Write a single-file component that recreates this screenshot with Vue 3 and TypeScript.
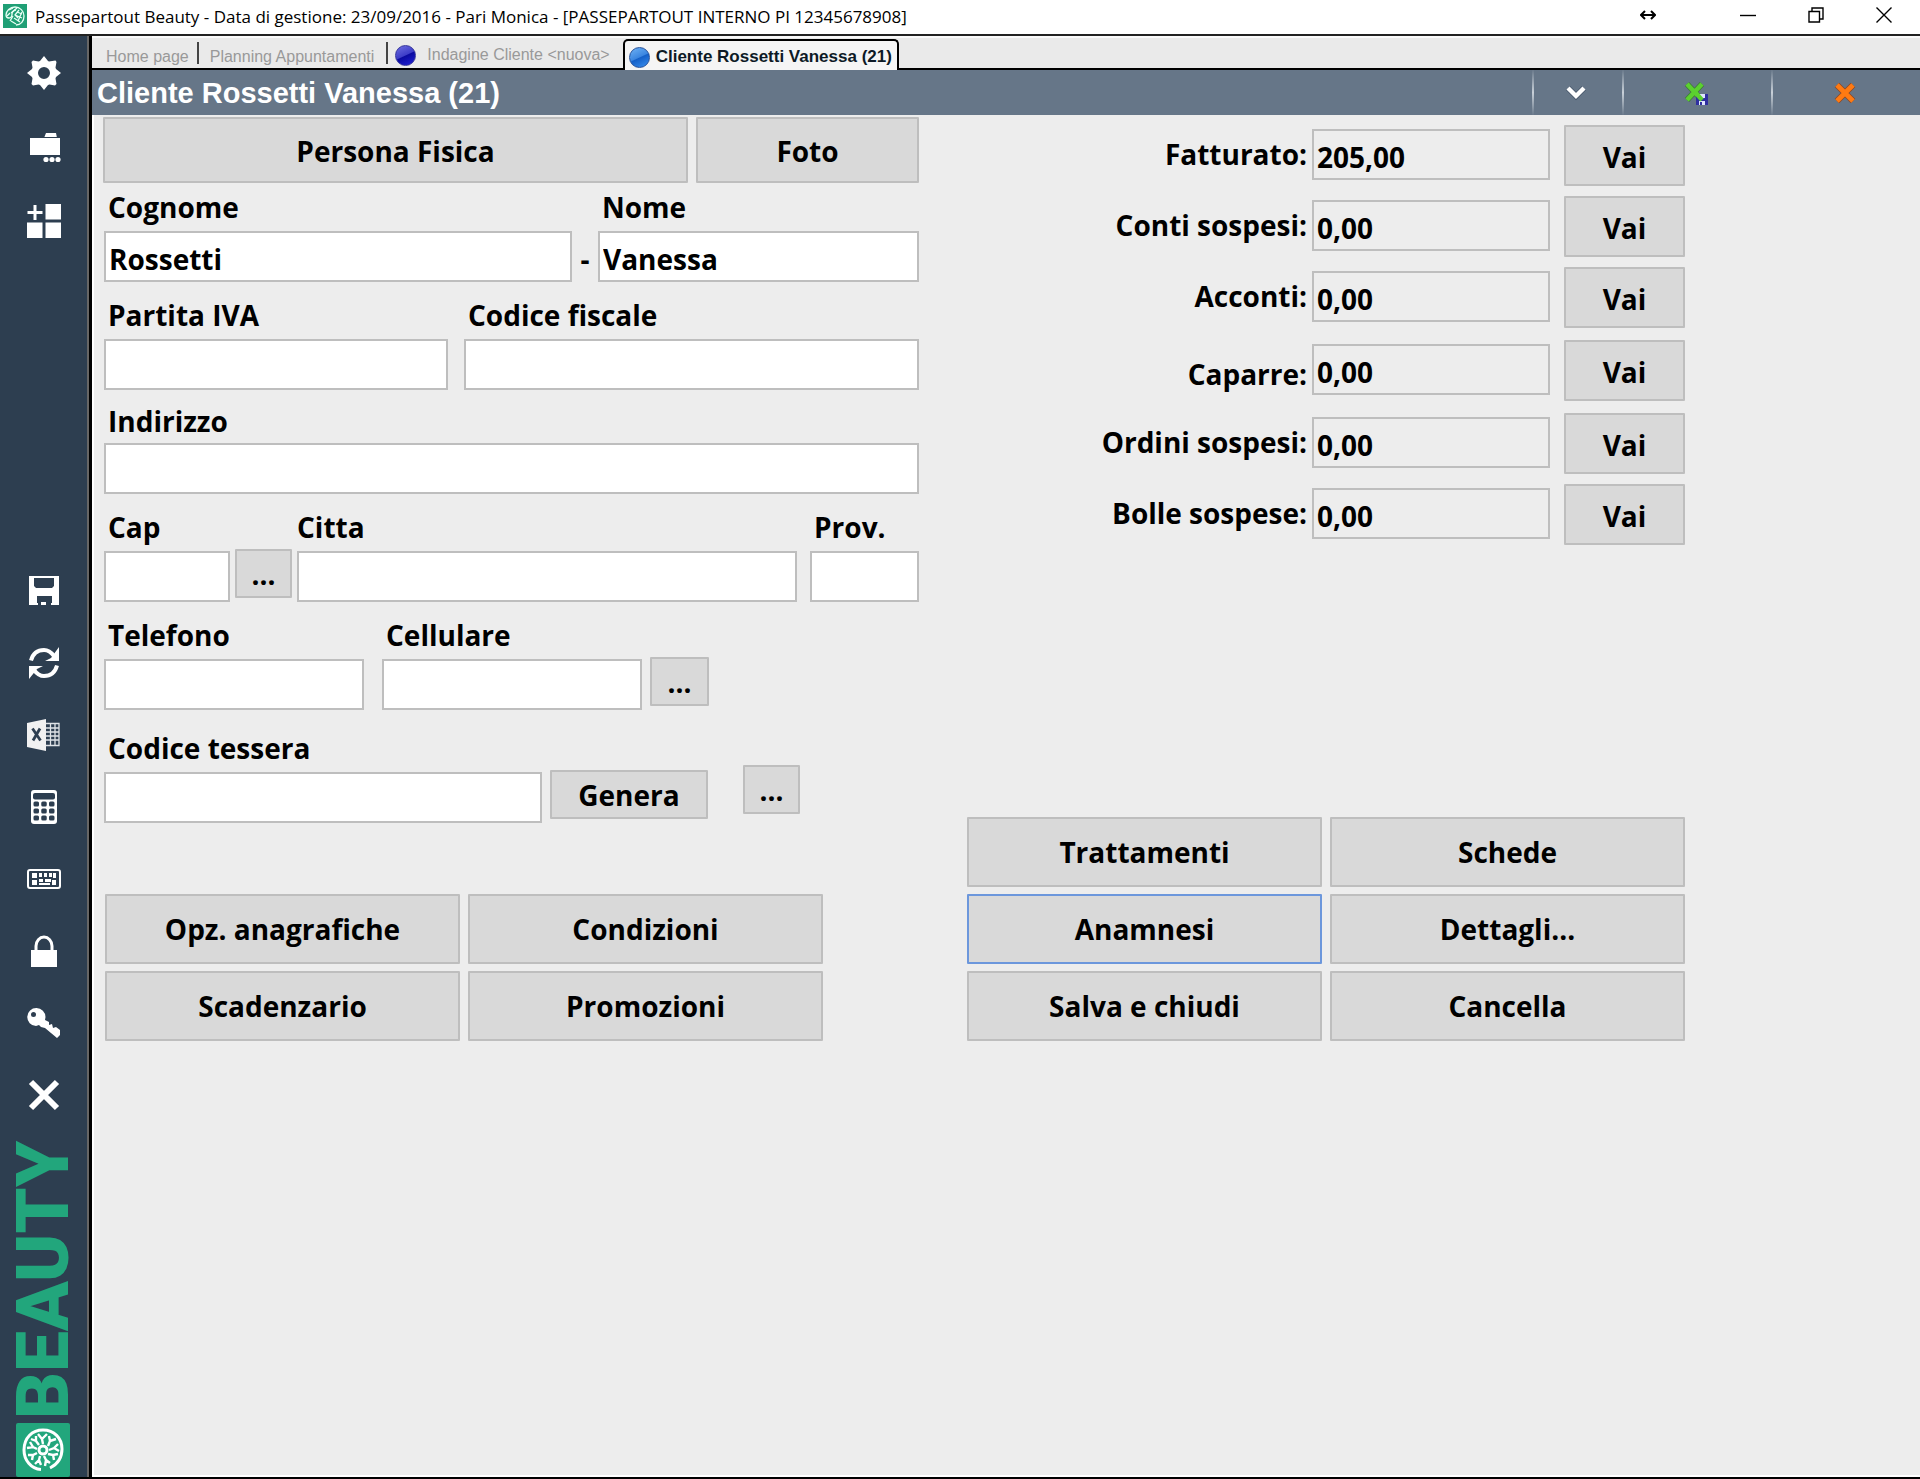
<script setup lang="ts">
import { reactive } from 'vue'

interface Amount {
  id: string
  label: string
  value: string
  spaced?: boolean
  low?: boolean
}

const client = reactive({
  cognome: 'Rossetti',
  nome: 'Vanessa',
  partitaIva: '',
  codiceFiscale: '',
  indirizzo: '',
  cap: '',
  citta: '',
  prov: '',
  telefono: '',
  cellulare: '',
  tessera: '',
})

const amounts: Amount[] = [
  { id: 'fatturato', label: 'Fatturato:', value: '205,00' },
  { id: 'conti', label: 'Conti sospesi:', value: '0,00' },
  { id: 'acconti', label: 'Acconti:', value: '0,00' },
  { id: 'caparre', label: 'Caparre:', value: '0,00', spaced: true, low: true },
  { id: 'ordini', label: 'Ordini sospesi:', value: '0,00', spaced: true },
  { id: 'bolle', label: 'Bolle sospese:', value: '0,00' },
]

const leftActions: string[] = ['Opz. anagrafiche', 'Condizioni', 'Scadenzario', 'Promozioni']
const rightActions: string[] = ['Trattamenti', 'Schede', 'Anamnesi', 'Dettagli...', 'Salva e chiudi', 'Cancella']
</script>

<template>
  <div class="window">
    <header class="titlebar">
      <svg class="app-icon" viewBox="0 0 24 24" aria-hidden="true">
        <rect width="24" height="24" fill="#1f9f75" />
        <g fill="none" stroke="#e8fff5" stroke-width="1.3">
          <path d="M13 21c5 0 8-4 8-9s-4-9-9-9-9 4-9 8c0 2 1 3 3 3s3-2 3-4 2-4 4-4" />
          <path d="M6 6l4-2M8 9l6-5M4 12l3-3M14 8l5 2M12 11l7 3M11 14l6 4M8 17l5 3M16 6l-4 5 3 3M10 12l-3 5M19 8l-4 9" />
        </g>
      </svg>
      <span class="title-text">Passepartout Beauty - Data di gestione: 23/09/2016 - Pari Monica - [PASSEPARTOUT INTERNO PI 12345678908]</span>
      <div class="window-controls">
        <button type="button" class="wc wc-resize" aria-label="Ridimensiona">
          <svg width="16" height="10" viewBox="0 0 16 10"><path d="M1 5h14M5 1L1 5l4 4M11 1l4 4-4 4" fill="none" stroke="#000" stroke-width="2" /></svg>
        </button>
        <button type="button" class="wc" aria-label="Riduci a icona">
          <svg width="16" height="16" viewBox="0 0 16 16"><path d="M0 8.500h16" stroke="#000" stroke-width="1.400" /></svg>
        </button>
        <button type="button" class="wc" aria-label="Ripristina">
          <svg width="16" height="16" viewBox="0 0 16 16"><path d="M1 4.500h10.500V15H1zM4 4.500V1h11v11h-3.500" fill="none" stroke="#000" stroke-width="1.400" /></svg>
        </button>
        <button type="button" class="wc" aria-label="Chiudi finestra">
          <svg width="16" height="16" viewBox="0 0 16 16"><path d="M.5.5l15 15M15.500.5l-15 15" stroke="#000" stroke-width="1.400" /></svg>
        </button>
      </div>
    </header>

    <div class="body">
      <nav class="sidebar" aria-label="Strumenti">
        <div class="tools tools-top">
          <button type="button" aria-label="Impostazioni">
            <svg width="34" height="34" viewBox="0 0 34 34">
              <path fill="#fff" fill-rule="evenodd" d="M17 0l4 5 1 .4L28.500 4.500 29.500 6l-1 5.500.5 1.500 5 4-5 4-.5 1.500 1 5.500-1.500 1.500-5.500-1-1.500.5-4 5-4-5-1.500-.5-5.500 1L4.500 28l1-5.500L5 21l-5-4 5-4 .5-1.500-1-5.500L6 4.500l5.500 1L13 5zM17 11a6 6 0 1 0 0 12 6 6 0 0 0 0-12z" />
            </svg>
          </button>
          <button type="button" aria-label="Archivi">
            <svg width="34" height="32" viewBox="0 0 34 32">
              <path fill="#fff" d="M3 7h14l2-5h10l1 5h3v17H3z" />
              <path d="M17 6.500h13" stroke="#2d3e50" stroke-width="1" />
              <g fill="#fff"><circle cx="19" cy="28.500" r="2.600" /><circle cx="25" cy="28.500" r="2.600" /><circle cx="31" cy="28.500" r="2.600" /></g>
            </svg>
          </button>
          <button type="button" aria-label="Aggiungi riquadro">
            <svg width="34" height="34" viewBox="0 0 34 34">
              <path fill="#fff" d="M18.500 0H34v15.500H18.500zM0 18.500h15.500V34H0zM18.500 18.500H34V34H18.500zM6.500 1h3v6h6v3h-6v6h-3v-6h-6V7h6z" />
            </svg>
          </button>
        </div>

        <div class="tools tools-bottom">
          <button type="button" aria-label="Salva">
            <svg width="32" height="32" viewBox="0 0 32 32">
              <path fill="#fff" fill-rule="evenodd" d="M1 1h30v29h-7v-9H9v9H1zM6 3v8l2 2h16l2-2V3z" />
              <path fill="#fff" d="M13 27h5v3h-5zM1 28h9v2H1zM23 28h8v2h-8z" />
            </svg>
          </button>
          <button type="button" aria-label="Aggiorna">
            <svg width="32" height="32" viewBox="0 0 32 32">
              <g fill="none" stroke="#fff" stroke-width="4"><path d="M3 13.500C5 6 10 3 16 3c4 0 7 2 10 6" /><path d="M29 18.500C27 26 22 29 16 29c-4 0-7-2-10-6" /></g>
              <path fill="#fff" d="M31 0v14H17l6-3zM1 32V19h14l-6 3z" />
            </svg>
          </button>
          <button type="button" aria-label="Esporta in Excel">
            <svg width="34" height="32" viewBox="0 0 34 32">
              <path d="M19 4.500h13v22H19M19 9h13M19 13h13M19 17h13M19 21h13M23.500 4v23M28 4v23" fill="none" stroke="#dfe3e7" stroke-width="1.300" />
              <path fill="#f1f1f1" d="M0 4l19-4v32L0 28z" />
              <path d="M5.500 9.500l8 12M13 9.500l-7 12" stroke="#2d3e50" stroke-width="2.800" />
            </svg>
          </button>
          <button type="button" aria-label="Calcolatrice">
            <svg width="28" height="34" viewBox="0 0 28 34">
              <rect x="1" width="26" height="34" rx="3" fill="#fff" />
              <g fill="#2d3e50">
                <rect x="3" y="3" width="22" height="6.500" rx="2" />
                <rect x="3.500" y="11.500" width="5.500" height="5" rx="1.500" /><rect x="11.250" y="11.500" width="5.500" height="5" rx="1.500" /><rect x="19" y="11.500" width="5.500" height="5" rx="1.500" />
                <rect x="3.500" y="18.500" width="5.500" height="5" rx="1.500" /><rect x="11.250" y="18.500" width="5.500" height="5" rx="1.500" /><rect x="19" y="18.500" width="5.500" height="5" rx="1.500" />
                <rect x="3.500" y="25.500" width="5.500" height="5" rx="1.500" /><rect x="11.250" y="25.500" width="5.500" height="5" rx="1.500" /><rect x="19" y="25.500" width="5.500" height="5" rx="1.500" />
              </g>
            </svg>
          </button>
          <button type="button" aria-label="Tastiera">
            <svg width="34" height="20" viewBox="0 0 34 20">
              <rect x="1" y="1" width="32" height="18" rx="2" fill="none" stroke="#fff" stroke-width="2" />
              <path fill="#fff" d="M5 4h5v5H5zM12 4h3v4h-3zM17 4h3v4h-3zM22 4h3v4h-3zM26 4h3v5h-3zM5 11h5v5H5zM12 10h4v3h-4zM18 10h6v3h-6zM12 14h11v2H12zM25 11h4v5h-4z" />
            </svg>
          </button>
          <button type="button" aria-label="Blocca">
            <svg width="26" height="32" viewBox="0 0 26 32">
              <path d="M5 16V11a8 9 0 0 1 16 0v5" fill="none" stroke="#fff" stroke-width="3" />
              <path fill="#fff" d="M0 15h26v17H0z" />
            </svg>
          </button>
          <button type="button" aria-label="Password">
            <svg width="34" height="32" viewBox="0 0 34 32">
              <path fill="#fff" fill-rule="evenodd" d="M9.500 1a9 9 0 0 1 9 9l-.5 3 4 2v3l3-1 1 4 3-1 4 3v5l-3 3-12-10-4-1-2-2-3 1a9 9 0 1 1 .5-18zM6.500 5A2.500 2.500 0 1 0 6.500 10 2.500 2.500 0 0 0 6.500 5z" />
            </svg>
          </button>
          <button type="button" aria-label="Esci">
            <svg width="32" height="32" viewBox="0 0 32 32"><path d="M3 3l26 26M29 3L3 29" stroke="#fff" stroke-width="6" /></svg>
          </button>
        </div>

        <div class="brand">
          <span class="brand-text">BEAUTY</span>
          <svg width="54" height="54" viewBox="0 0 54 54" aria-hidden="true">
            <rect width="54" height="54" rx="2" fill="#22a67c" />
            <g fill="none" stroke="#fff" stroke-width="3">
              <path d="M25 46.500C15 46 8 37 8 27 8 15 16 7 27 7s19 8 19 19c0 8-4 15-12 19" />
              <circle cx="27" cy="27" r="4" />
            </g>
            <g fill="none" stroke="#fff" stroke-width="2.400">
              <path d="M27 21l-1-5-4-5M26 16l5-5M32 23l2-5-1-5M34 18l6-2M33 27l5-2 4-4M38 25l5 3M32 31l5 1 5-1M37 32l1 5M28 33l2 4 4 3M30 37l-1 6M24 33l-1 4-4 4M23 37l2 5M21 30l-4 2-5 0M17 32l-1 5M21 26l-4-2-6 1M17 24l-3-5M23 22l-3-4-5-2M20 18l0-5" />
            </g>
          </svg>
        </div>
      </nav>

      <main class="main">
        <nav class="tabs" aria-label="Schede aperte">
          <a href="#" class="tab tab-first">Home page</a>
          <a href="#" class="tab tab-plan">Planning Appuntamenti</a>
          <a href="#" class="tab tab-orb"><i class="orb orb-dark"></i>Indagine Cliente &lt;nuova&gt;</a>
          <a href="#" class="tab tab-active" aria-current="page"><i class="orb orb-light"></i>Cliente Rossetti Vanessa (21)</a>
        </nav>

        <div class="heading">
          <h1>Cliente Rossetti Vanessa (21)</h1>
          <button type="button" class="head-btn head-narrow" aria-label="Altro">
            <svg width="22" height="16" viewBox="0 0 22 16">
              <path d="M3 3l8 8 8-8" fill="none" stroke="#46566a" stroke-width="6" />
              <path d="M3 3l8 8 8-8" fill="none" stroke="#fff" stroke-width="4.400" />
            </svg>
          </button>
          <button type="button" class="head-btn" aria-label="Salva e chiudi scheda">
            <svg width="24" height="26" viewBox="0 0 24 26">
              <path d="M3 4l15 16M18 4L3 20" stroke="#3f7a3a" stroke-width="6" />
              <path d="M3 4l15 16M18 4L3 20" stroke="#5bd02f" stroke-width="4.400" />
              <path fill="#2f2fa0" d="M12 14h12v11H12z" /><path fill="#dfe3ff" d="M15 14h6v4h-6zM15 21h6v4h-6z" /><path fill="#2f2fa0" d="M16 22h2v3h-2z" />
              <path d="M11 12l7 8" stroke="#5bd02f" stroke-width="4.400" />
            </svg>
          </button>
          <button type="button" class="head-btn" aria-label="Chiudi scheda">
            <svg width="22" height="22" viewBox="0 0 22 22">
              <path d="M3 3l16 16M19 3L3 19" stroke="#8a4a2a" stroke-width="6.400" />
              <path d="M3 3l16 16M19 3L3 19" stroke="#ff7a12" stroke-width="4.800" />
            </svg>
          </button>
        </div>

        <form class="content" @submit.prevent>
          <section class="column">
            <div class="top-buttons">
              <button type="button" class="btn">Persona Fisica</button>
              <button type="button" class="btn">Foto</button>
            </div>

            <div class="fields">
              <div class="row row-name">
                <div class="field"><label for="cognome">Cognome</label><input id="cognome" v-model="client.cognome" type="text" /></div>
                <span class="dash">-</span>
                <div class="field"><label for="nome">Nome</label><input id="nome" v-model="client.nome" type="text" /></div>
              </div>
              <div class="row row-tax gap-m">
                <div class="field"><label for="piva">Partita IVA</label><input id="piva" v-model="client.partitaIva" type="text" /></div>
                <div class="field"><label for="cf">Codice fiscale</label><input id="cf" v-model="client.codiceFiscale" type="text" /></div>
              </div>
              <div class="row row-address">
                <div class="field"><label for="indirizzo">Indirizzo</label><input id="indirizzo" v-model="client.indirizzo" type="text" /></div>
              </div>
              <div class="row row-city gap-m">
                <div class="field"><label for="cap">Cap</label><input id="cap" v-model="client.cap" type="text" /></div>
                <button type="button" class="btn btn-more" aria-label="Cerca cap">...</button>
                <div class="field field-citta"><label for="citta">Citta</label><input id="citta" v-model="client.citta" type="text" /></div>
                <div class="field"><label for="prov">Prov.</label><input id="prov" v-model="client.prov" type="text" /></div>
              </div>
              <div class="row row-phone gap-m">
                <div class="field"><label for="telefono">Telefono</label><input id="telefono" v-model="client.telefono" type="text" /></div>
                <div class="field"><label for="cellulare">Cellulare</label><input id="cellulare" v-model="client.cellulare" type="text" /></div>
                <button type="button" class="btn btn-more" aria-label="Altri recapiti">...</button>
              </div>
              <div class="row row-card gap-l">
                <div class="field"><label for="tessera">Codice tessera</label><input id="tessera" v-model="client.tessera" type="text" /></div>
                <button type="button" class="btn btn-more">Genera</button>
                <button type="button" class="btn btn-more btn-raised" aria-label="Cerca tessera">...</button>
              </div>
            </div>

            <div class="actions actions-left">
              <button v-for="name in leftActions" :key="name" type="button" class="btn">{{ name }}</button>
            </div>
          </section>

          <section class="column column-right">
            <div class="amounts">
              <div v-for="a in amounts" :key="a.id" class="amount" :class="{ spaced: a.spaced, low: a.low }">
                <label :for="a.id">{{ a.label }}</label>
                <input :id="a.id" type="text" :value="a.value" readonly />
                <button type="button" class="btn">Vai</button>
              </div>
            </div>
            <div class="actions">
              <button v-for="name in rightActions" :key="name" type="button" class="btn" :class="{ focused: name === 'Anamnesi' }">{{ name }}</button>
            </div>
          </section>
        </form>
      </main>
    </div>
  </div>
</template>

<style>
body {
  margin: 0;
  background: #ededed;
}
</style>

<style scoped>
.window {
  display: flex;
  flex-direction: column;
  box-sizing: border-box;
  min-height: 100vh;
  border-bottom: 2px solid #000;
  color: #000;
  font-family: 'Open Sans', 'Noto Sans', sans-serif;
}
.window *,
.window *::before {
  box-sizing: border-box;
}
button {
  font: inherit;
  color: inherit;
  margin: 0;
  padding: 0;
  border: 0;
  background: none;
  cursor: pointer;
}
svg {
  display: block;
}

/* title bar */
.titlebar {
  display: flex;
  align-items: center;
  height: 36px;
  padding: 0 2px 2px 3px;
  background: #fff;
  border-bottom: 2px solid #222;
}
.app-icon {
  width: 24px;
  height: 24px;
}
.title-text {
  flex: 1;
  margin-left: 8px;
  padding-top: 2px;
  font-size: 17px;
  line-height: 24px;
  white-space: nowrap;
}
.window-controls {
  display: flex;
}
.wc {
  display: grid;
  place-items: center;
  width: 68px;
  height: 28px;
  padding-bottom: 2px;
}
.wc-resize {
  margin-right: 32px;
}

.body {
  display: flex;
  flex: 1;
}

/* sidebar */
.sidebar {
  display: flex;
  flex-direction: column;
  flex: none;
  width: 92px;
  background: #2d3e50;
  border-right: 3px solid #000;
  box-shadow: inset -2px 0 #666;
}
.tools button {
  display: grid;
  place-items: center;
  width: 88px;
  height: 72px;
}
.tools-top button {
  height: 74px;
}
.tools-bottom {
  margin-top: auto;
}
.brand {
  display: flex;
  flex-direction: column;
  align-items: center;
  justify-content: flex-end;
  width: 86px;
  min-height: 346px;
}
.brand-text {
  width: 54px;
  margin-bottom: 4px;
  color: #22a67c;
  font-family: Roboto, sans-serif;
  font-weight: 900;
  font-size: 73px;
  line-height: 54px;
  writing-mode: vertical-rl;
  transform: rotate(180deg);
}

/* tabs */
.main {
  display: flex;
  flex-direction: column;
  flex: 1;
  min-width: 0;
  background: #ededed;
}
.tabs {
  display: flex;
  align-items: flex-end;
  height: 34px;
  background: #eaeaea;
  border-top: 2px solid #fafafa;
  border-bottom: 2px solid #000;
  font-family: 'Liberation Sans', Arial, sans-serif;
  font-size: 16px;
}
.tab {
  display: flex;
  align-items: center;
  height: 22px;
  margin-bottom: 4px;
  padding: 8px 8px 0 11px;
  border-right: 2px solid #444;
  color: #999;
  text-decoration: none;
  white-space: nowrap;
}
.tab-first {
  padding-left: 14px;
}
.tab-plan {
  padding-right: 12px;
}
.tab-orb {
  padding: 4px 13px 0 7px;
  border-right: 0;
}
.tab-active {
  height: 31px;
  margin: 0 0 -2px;
  padding: 3px 5px 0 4px;
  background: #f5f5f5;
  border: 2px solid #000;
  border-bottom: 0;
  border-radius: 5px 5px 0 0;
  color: #0d1a26;
  font-weight: 700;
  font-size: 17px;
}
.orb {
  width: 21px;
  height: 21px;
  margin-right: 11px;
  border-radius: 50%;
}
.orb-dark {
  background: linear-gradient(155deg, #6e6ee0 0%, #3d3dc8 48%, #0a0aa0 52%, #2222d8 100%);
  border: 1px solid #33339a;
}
.orb-light {
  margin-right: 6px;
  background: linear-gradient(155deg, #6fb2f5 0%, #3b86e0 48%, #1460c8 52%, #3a90f0 100%);
  border: 1px solid #24509a;
}

/* heading bar */
.heading {
  display: flex;
  height: 45px;
  background: #667688;
}
h1 {
  flex: 1;
  margin: 0;
  padding: 1px 0 0 5px;
  color: #fff;
  font-family: 'Liberation Sans', Arial, sans-serif;
  font-size: 29px;
  font-weight: 700;
  line-height: 45px;
}
.head-btn {
  display: grid;
  place-items: center;
  width: 149px;
  padding: 1px 4px 0 0;
  border-left: 2px solid;
  border-image: linear-gradient(#667688, #c8d0d8, #667688) 1;
}
.head-narrow {
  width: 90px;
}

/* form */
.content {
  display: grid;
  flex: 1;
  align-content: start;
  grid-template-columns: 816fr 718fr;
  column-gap: 48px;
  padding: 2px 235px 40px 9px;
  border-left: 2px solid #fff;
  border-bottom: 2px solid #fff;
  font-size: 28px;
  font-weight: 700;
  line-height: 40px;
}
.btn {
  background: #d9d9d9;
  border: 2px solid #bebebe;
  border-radius: 1px;
  white-space: nowrap;
}
.btn.focused {
  border-color: #6c97dc;
}
input {
  display: block;
  width: 100%;
  min-width: 0;
  height: 51px;
  margin: 0;
  padding: 4px 3px 0;
  background: #fff;
  border: 2px solid #bebebe;
  border-radius: 0;
  color: #000;
  font: inherit;
  outline: 0;
}
.top-buttons {
  display: grid;
  grid-template-columns: 585fr 223fr;
  column-gap: 8px;
}
.top-buttons .btn {
  height: 66px;
  padding-top: 2px;
}
.fields {
  padding: 4px 0 0 1px;
}
.row {
  display: grid;
  align-items: end;
}
.row-address {
  margin-top: 11px;
}
.gap-m {
  margin-top: 13px;
}
.gap-l {
  margin-top: 18px;
}
.row-name {
  grid-template-columns: 468fr 26px 321fr;
}
.row-tax {
  grid-template-columns: 344fr 455fr;
  column-gap: 16px;
}
.row-city {
  grid-template-columns: 126fr 57fr 508fr 109fr;
  column-gap: 5px;
}
.field-citta {
  margin-right: 8px;
}
.row-phone {
  grid-template-columns: 270fr 260fr 59fr 202fr;
  column-gap: 8px;
}
.row-phone .field:first-child {
  margin-right: 10px;
}
.row-card {
  grid-template-columns: 438fr 158fr 84fr 111fr;
  column-gap: 8px;
}
.field label {
  display: block;
  margin-bottom: 4px;
  padding-left: 4px;
}
.row-address label {
  margin-bottom: 2px;
}
.field-citta label {
  padding-left: 0;
}
.dash {
  padding-bottom: 3px;
  text-align: center;
}
.btn-more {
  height: 49px;
  margin-bottom: 4px;
}
.btn-raised {
  margin: 0 0 9px 27px;
}

.actions {
  display: grid;
  grid-template-columns: 1fr 1fr;
  gap: 7px 8px;
}
.actions .btn {
  height: 70px;
}
.actions-left {
  margin: 71px 96px 0 2px;
}
.column-right {
  display: flex;
  flex-direction: column;
  justify-content: space-between;
}
.amounts {
  display: grid;
  row-gap: 10px;
  padding-top: 8px;
}
.amount {
  display: grid;
  grid-template-columns: 345fr 238fr 135fr;
  align-items: start;
}
.amount.spaced {
  margin-top: 2px;
}
.amount label {
  padding: 9px 5px 0 0;
  text-align: right;
}
.amount.low label {
  padding-top: 14px;
}
.amount input {
  margin-top: 4px;
  background: #ededed;
}
.amount .btn {
  height: 61px;
  margin-left: 14px;
  padding-top: 3px;
}
</style>
